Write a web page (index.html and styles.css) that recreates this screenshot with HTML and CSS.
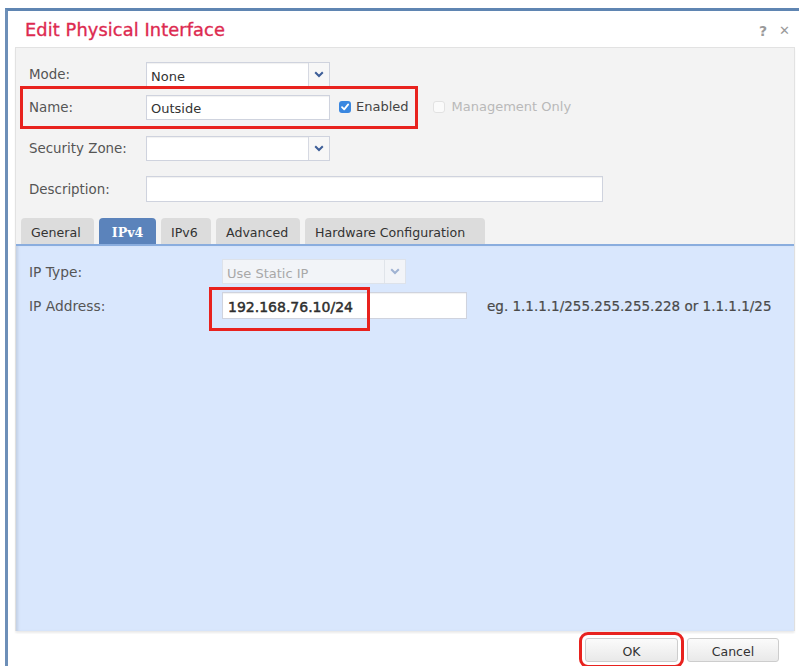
FILE: index.html
```html
<!DOCTYPE html>
<html lang="en">
<head>
<meta charset="utf-8">
<title>Edit Physical Interface</title>
<link rel="stylesheet" href="styles.css">
</head>
<body>
<div class="dialog">
  <header class="dialog-head">
    <h1 class="dialog-title">Edit Physical Interface</h1>
    <div class="dialog-tools">
      <span class="tool">?</span>
      <span class="tool tool-close">&#x2715;</span>
    </div>
  </header>

  <div class="dialog-body">
    <div class="general">
      <div class="row row-mode">
        <span class="label">Mode:</span>
        <div class="select w-select">
          <span class="select-value">None</span>
          <span class="select-arrow"><svg width="10" height="7" viewBox="0 0 10 7"><path d="M1.2 1.2 L5 5 L8.8 1.2" fill="none" stroke="#3d5e98" stroke-width="2"/></svg></span>
        </div>
      </div>

      <div class="row row-name">
        <div class="mark-name">
          <span class="label">Name:</span>
          <div class="input w-select">Outside</div>
          <span class="check">
            <span class="box box-on"><svg width="12" height="12" viewBox="0 0 12 12"><path d="M3 6.2 L5.2 8.4 L9.2 3.4" fill="none" stroke="#fff" stroke-width="1.8" stroke-linecap="round" stroke-linejoin="round"/></svg></span>
            Enabled
          </span>
        </div>
        <span class="check check-off">
          <span class="box"></span>
          Management Only
        </span>
      </div>

      <div class="row row-zone">
        <span class="label">Security Zone:</span>
        <div class="select w-select">
          <span class="select-value"></span>
          <span class="select-arrow"><svg width="10" height="7" viewBox="0 0 10 7"><path d="M1.2 1.2 L5 5 L8.8 1.2" fill="none" stroke="#3d5e98" stroke-width="2"/></svg></span>
        </div>
      </div>

      <div class="row row-desc">
        <span class="label">Description:</span>
        <div class="input w-wide"></div>
      </div>
    </div>

    <nav class="tabs">
      <span class="tab">General</span>
      <span class="tab tab-active">IPv4</span>
      <span class="tab">IPv6</span>
      <span class="tab">Advanced</span>
      <span class="tab">Hardware Configuration</span>
    </nav>

    <section class="tab-panel">
      <div class="prow">
        <span class="plabel">IP Type:</span>
        <div class="select select-disabled w-type">
          <span class="select-value">Use Static IP</span>
          <span class="select-arrow"><svg width="10" height="7" viewBox="0 0 10 7"><path d="M1.2 1.2 L5 5 L8.8 1.2" fill="none" stroke="#9fb2d2" stroke-width="2"/></svg></span>
        </div>
      </div>
      <div class="prow prow-addr">
        <span class="plabel">IP Address:</span>
        <div class="addr-field">
          <div class="input input-addr w-addr">192.168.76.10/24</div>
          <span class="addr-mark"></span>
        </div>
        <span class="hint">eg. 1.1.1.1/255.255.255.228 or 1.1.1.1/25</span>
      </div>
    </section>
  </div>

  <footer class="dialog-foot">
    <button class="btn btn-ok" type="button">OK</button>
    <button class="btn" type="button">Cancel</button>
  </footer>
</div>
</body>
</html>
```

FILE: styles.css
```css
* {
  box-sizing: border-box;
}

html,
body {
  margin: 0;
  height: 100%;
  background: #ffffff;
  overflow: hidden;
}

body {
  font-family: "DejaVu Sans", Verdana, sans-serif;
  color: #444;
}

/* ---------- dialog frame ---------- */
.dialog {
  margin: 8px 0 0 5px;
  height: 658px;
  border-top: 3px solid #5f85b2;
  border-left: 3px solid #6d8fb8;
  background: #ffffff;
  display: flex;
  flex-direction: column;
}

.dialog-head {
  height: 36px;
  flex: none;
  display: flex;
  align-items: center;
  justify-content: space-between;
  padding: 0 9px 0 17px;
}

.dialog-title {
  margin: 0;
  font-size: 17.8px;
  font-weight: normal;
  color: #dd2a50;
  letter-spacing: 0.1px;
  -webkit-text-stroke: 0.35px #dd2a50;
}

.dialog-tools {
  display: flex;
  align-items: center;
  gap: 12px;
  color: #9a9a9a;
  font-size: 14px;
  font-weight: bold;
  padding-top: 3px;
}

.tool-close {
  font-size: 13px;
}

.dialog-body {
  flex: 1;
  margin: 0 4px 0 7px;
  border: 1px solid #e2e2e2;
  border-bottom: none;
  background: #f3f3f3;
  display: flex;
  flex-direction: column;
  box-shadow: 0 2px 2px rgba(0, 0, 0, 0.05);
}

/* ---------- general fields ---------- */
.general {
  padding: 14px 0 0 13px;
  display: flex;
  flex-direction: column;
}

.row {
  display: flex;
  align-items: center;
  height: 25px;
}

.row-name {
  margin-top: 8px;
}

.row-zone {
  margin-top: 16px;
}

.row-desc {
  margin-top: 15px;
  height: 26px;
}

.label {
  width: 117px;
  flex: none;
  font-size: 13.4px;
  color: #555;
}

.mark-name {
  display: flex;
  align-items: center;
  height: 25px;
  outline: 3px solid #e8221e;
  outline-offset: 6px;
}

.input,
.select {
  height: 25px;
  background: #ffffff;
  border: 1px solid #cfd3de;
  box-shadow: inset 0 1px 1px rgba(0, 0, 0, 0.06);
  font-size: 13px;
  color: #333;
  display: flex;
  align-items: center;
}

.input {
  padding: 2px 4px 0;
}

.row-desc .input {
  height: 26px;
}

.w-select {
  width: 184px;
}

.w-wide {
  width: 457px;
}

.select-value {
  flex: 1;
  padding: 3px 4px 0;
}

.select-arrow {
  width: 21px;
  height: 100%;
  border-left: 1px solid #d6d9e2;
  background: #f7f7f7;
  display: flex;
  align-items: center;
  justify-content: center;
}

/* checkboxes */
.check {
  display: flex;
  align-items: center;
  gap: 5px;
  margin-left: 9px;
  font-size: 13px;
  color: #444;
  margin-top: -2px;
}

.box {
  width: 12px;
  height: 12px;
  border-radius: 3px;
  border: 1px solid #d4d4d4;
  background: #fafafa;
  display: flex;
}

.box-on {
  border: none;
  background: #3a87e0;
}

.check-off {
  margin-left: 24px;
  color: #b9b9b9;
  gap: 7px;
}

.check-off .box {
  border-color: #e2e2e2;
}

/* ---------- tabs ---------- */
.tabs {
  display: flex;
  gap: 5px;
  padding: 16px 0 0 5px;
}

.tab {
  height: 26px;
  padding: 3px 10px 0;
  background: #dcdcdc;
  border-radius: 4px 4px 0 0;
  font-size: 12.6px;
  color: #333;
  display: flex;
  align-items: center;
}

.tab:nth-child(1) {
  width: 73px;
}

.tab:nth-child(2) {
  width: 57px;
}

.tab:nth-child(3) {
  width: 50px;
}

.tab:nth-child(4) {
  width: 84px;
}

.tab:nth-child(5) {
  width: 180px;
}

.tab-active {
  background: #5b83bb;
  color: #ffffff;
  font-weight: bold;
  font-family: "DejaVu Serif", "Liberation Serif", serif;
  justify-content: center;
}

/* ---------- IPv4 panel ---------- */
.tab-panel {
  flex: 1;
  background: #d9e7fd;
  border-top: 2px solid #8aadde;
  padding: 13px 0 0 13px;
  box-shadow: inset 3px 0 3px -1px rgba(0, 0, 0, 0.10), 0 2px 2px rgba(0, 0, 0, 0.04);
  display: flex;
  flex-direction: column;
  gap: 8px;
}

.prow {
  display: flex;
  align-items: center;
}

.plabel {
  width: 193px;
  flex: none;
  font-size: 13.8px;
  color: #555;
}

.w-type {
  width: 184px;
}

.select-disabled {
  background: #f2f4f8;
  border-color: #dde2ea;
  box-shadow: none;
  color: #a8a8a8;
}

.select-disabled .select-arrow {
  background: #f2f4f8;
  border-left-color: #e0e4ea;
}

.addr-field {
  position: relative;
  flex: none;
}

.input-addr {
  height: 27px;
  font-size: 14px;
  color: #2e2e2e;
  padding-left: 5px;
  -webkit-text-stroke: 0.45px #2e2e2e;
}

.w-addr {
  width: 245px;
}

/* red annotation frame around the address value */
.addr-mark {
  position: absolute;
  left: -13px;
  top: -5px;
  width: 161px;
  height: 44px;
  border: 3px solid #e8221e;
}

.hint {
  margin-left: 20px;
  font-size: 13.5px;
  color: #4a4a4a;
  -webkit-text-stroke: 0.2px #4a4a4a;
}

/* ---------- footer ---------- */
.dialog-foot {
  flex: none;
  height: 35px;
  display: flex;
  justify-content: flex-end;
  align-items: flex-start;
  gap: 9px;
  padding: 7px 20px 0 0;
}

.btn {
  height: 24px;
  width: 92px;
  border: 1px solid #cdcdcd;
  border-radius: 3px;
  background: linear-gradient(#fbfbfb, #e9e9e9);
  font-family: "DejaVu Sans", Verdana, sans-serif;
  font-size: 12.5px;
  color: #333;
  padding: 2px 0 0;
}

.btn-ok {
  width: 93px;
  outline: 3px solid #e8221e;
  outline-offset: 3px;
}
```
